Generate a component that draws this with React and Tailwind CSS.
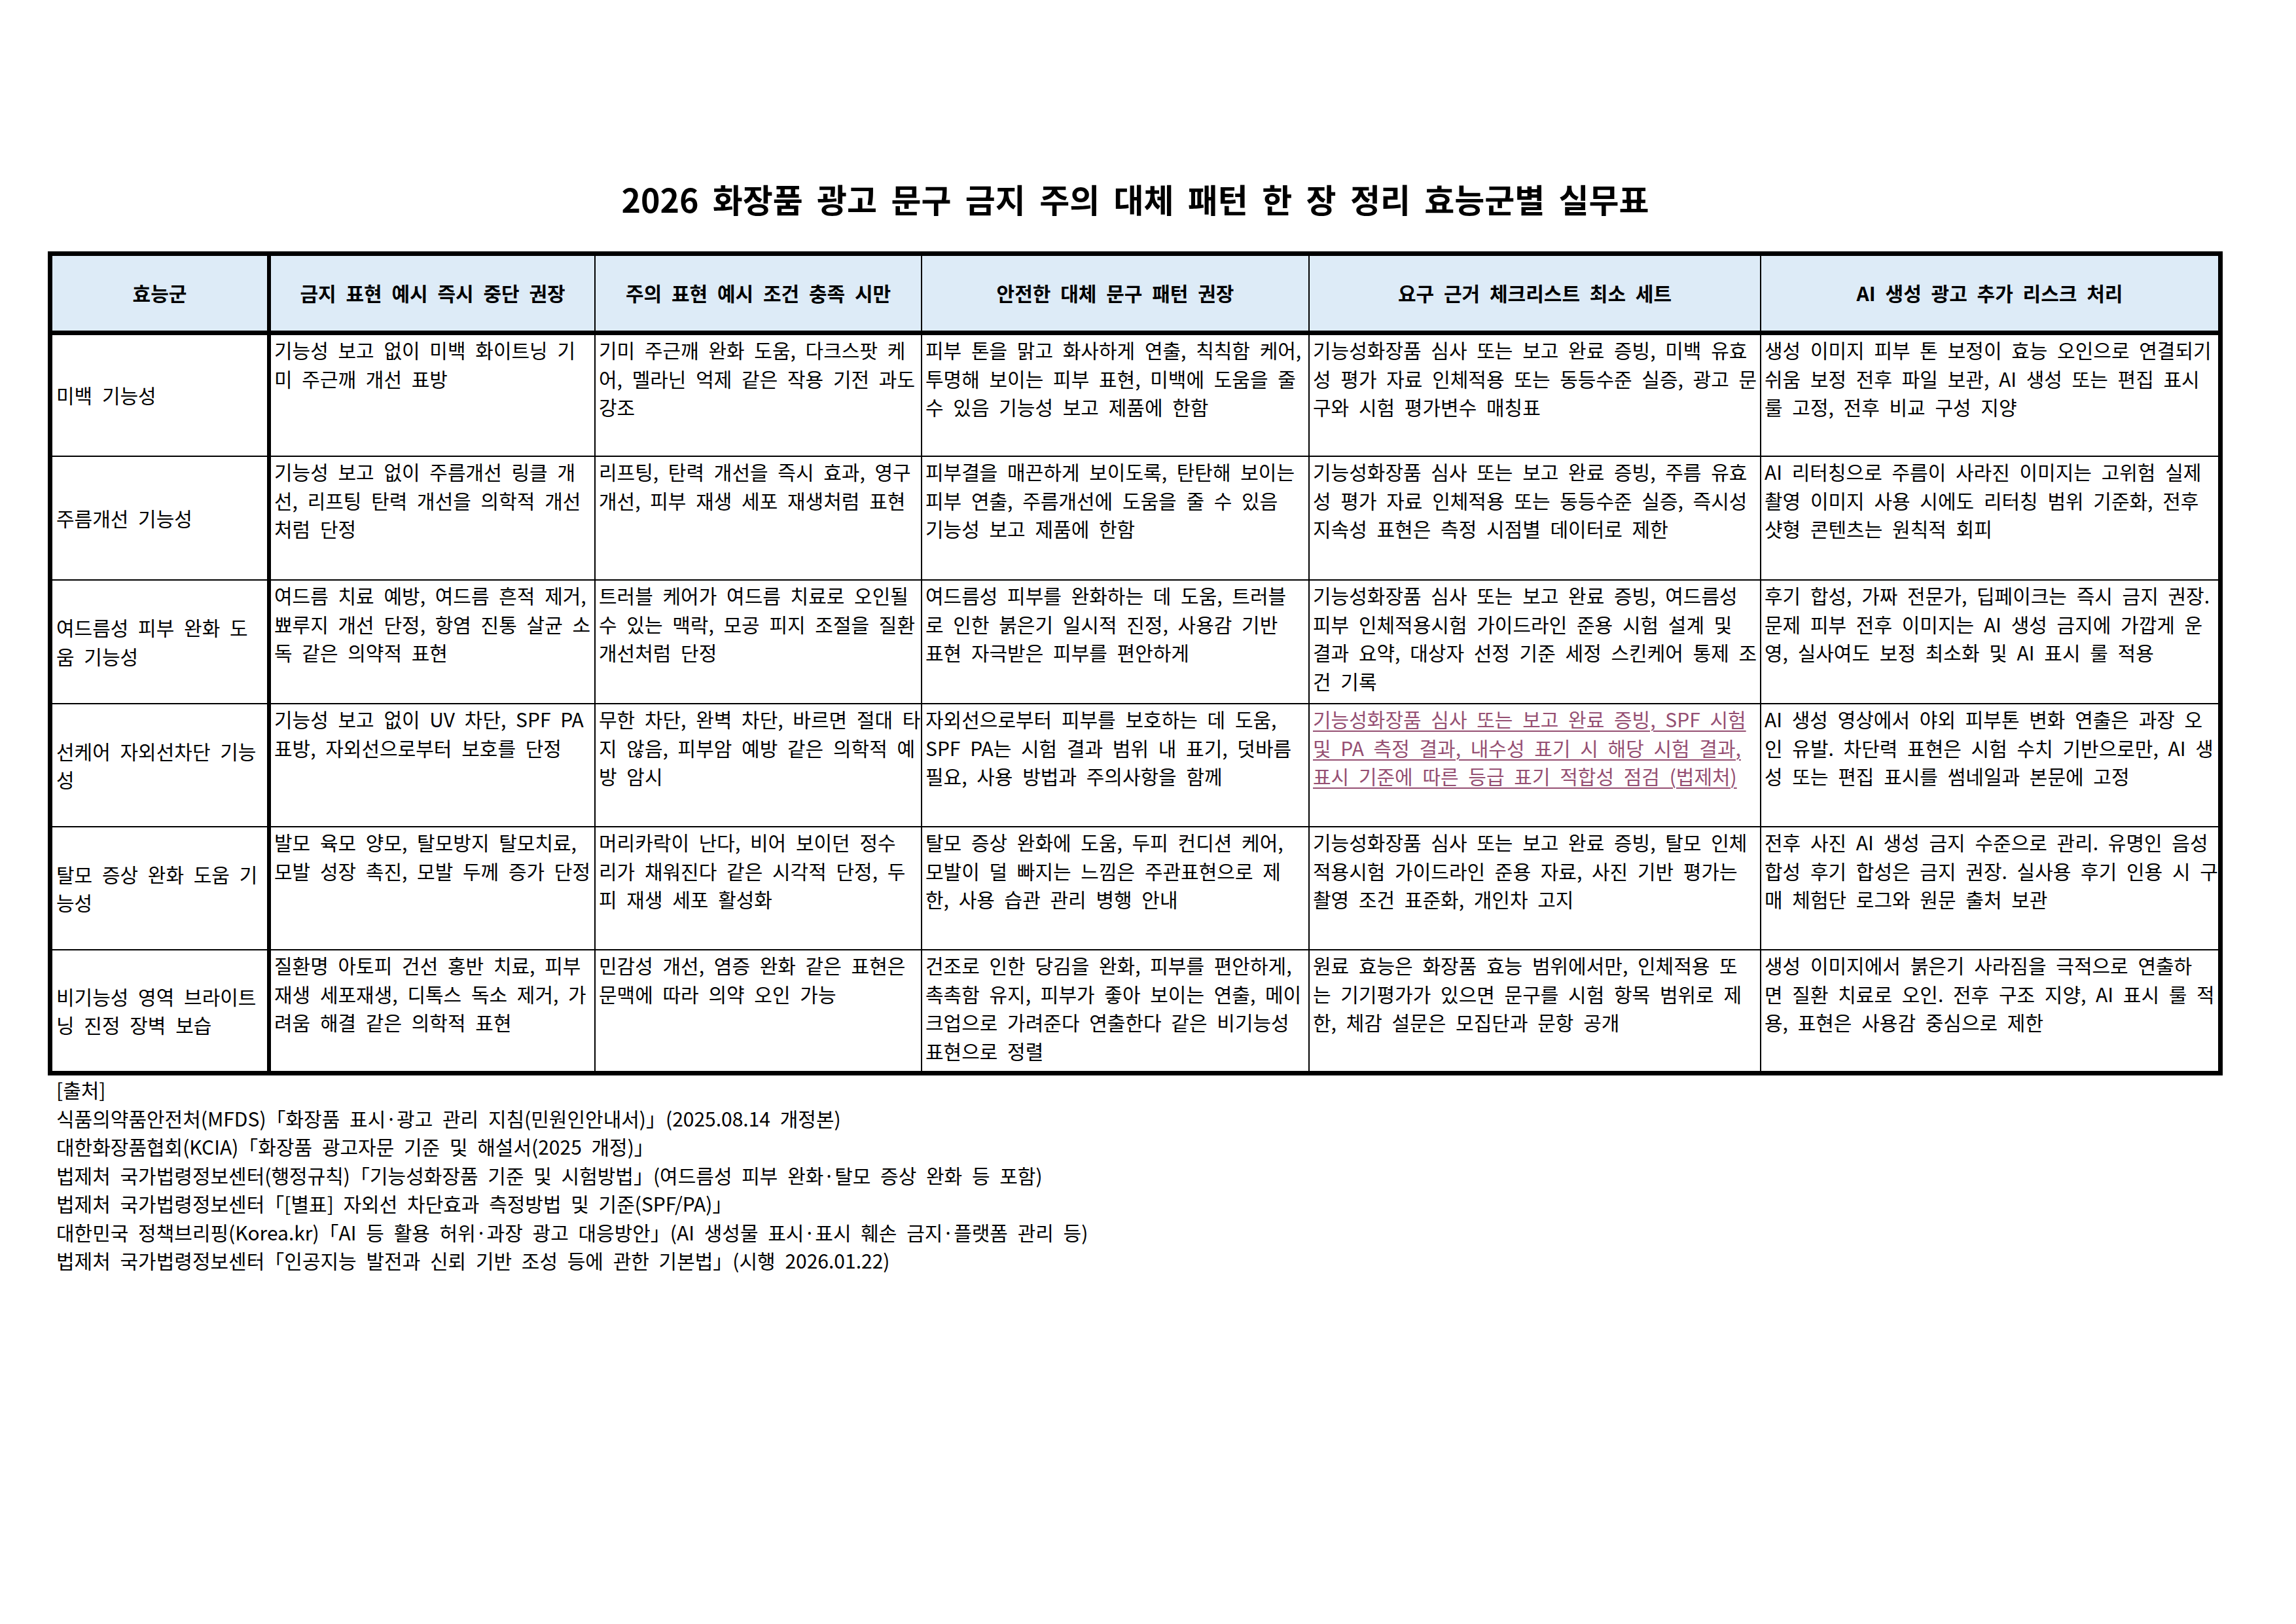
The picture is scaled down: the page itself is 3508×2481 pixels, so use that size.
import React from "react";

const headers = [
  "효능군",
  "금지 표현 예시 즉시 중단 권장",
  "주의 표현 예시 조건 충족 시만",
  "안전한 대체 문구 패턴 권장",
  "요구 근거 체크리스트 최소 세트",
  "AI 생성 광고 추가 리스크 처리",
];

// 각 셀은 원본과 같은 줄바꿈을 유지하려고 줄 단위로 적음
const rows = [
  {
    name: ["미백 기능성"],
    cells: [
      ["기능성 보고 없이 미백 화이트닝 기", "미 주근깨 개선 표방"],
      ["기미 주근깨 완화 도움, 다크스팟 케", "어, 멜라닌 억제 같은 작용 기전 과도", "강조"],
      ["피부 톤을 맑고 화사하게 연출, 칙칙함 케어,", "투명해 보이는 피부 표현, 미백에 도움을 줄", "수 있음 기능성 보고 제품에 한함"],
      ["기능성화장품 심사 또는 보고 완료 증빙, 미백 유효", "성 평가 자료 인체적용 또는 동등수준 실증, 광고 문", "구와 시험 평가변수 매칭표"],
      ["생성 이미지 피부 톤 보정이 효능 오인으로 연결되기", "쉬움 보정 전후 파일 보관, AI 생성 또는 편집 표시", "룰 고정, 전후 비교 구성 지양"],
    ],
  },
  {
    name: ["주름개선 기능성"],
    cells: [
      ["기능성 보고 없이 주름개선 링클 개", "선, 리프팅 탄력 개선을 의학적 개선", "처럼 단정"],
      ["리프팅, 탄력 개선을 즉시 효과, 영구", "개선, 피부 재생 세포 재생처럼 표현"],
      ["피부결을 매끈하게 보이도록, 탄탄해 보이는", "피부 연출, 주름개선에 도움을 줄 수 있음", "기능성 보고 제품에 한함"],
      ["기능성화장품 심사 또는 보고 완료 증빙, 주름 유효", "성 평가 자료 인체적용 또는 동등수준 실증, 즉시성", "지속성 표현은 측정 시점별 데이터로 제한"],
      ["AI 리터칭으로 주름이 사라진 이미지는 고위험 실제", "촬영 이미지 사용 시에도 리터칭 범위 기준화, 전후", "샷형 콘텐츠는 원칙적 회피"],
    ],
  },
  {
    name: ["여드름성 피부 완화 도", "움 기능성"],
    cells: [
      ["여드름 치료 예방, 여드름 흔적 제거,", "뾰루지 개선 단정, 항염 진통 살균 소", "독 같은 의약적 표현"],
      ["트러블 케어가 여드름 치료로 오인될", "수 있는 맥락, 모공 피지 조절을 질환", "개선처럼 단정"],
      ["여드름성 피부를 완화하는 데 도움, 트러블", "로 인한 붉은기 일시적 진정, 사용감 기반", "표현 자극받은 피부를 편안하게"],
      ["기능성화장품 심사 또는 보고 완료 증빙, 여드름성", "피부 인체적용시험 가이드라인 준용 시험 설계 및", "결과 요약, 대상자 선정 기준 세정 스킨케어 통제 조", "건 기록"],
      ["후기 합성, 가짜 전문가, 딥페이크는 즉시 금지 권장.", "문제 피부 전후 이미지는 AI 생성 금지에 가깝게 운", "영, 실사여도 보정 최소화 및 AI 표시 룰 적용"],
    ],
  },
  {
    name: ["선케어 자외선차단 기능", "성"],
    link: 3,
    cells: [
      ["기능성 보고 없이 UV 차단, SPF PA", "표방, 자외선으로부터 보호를 단정"],
      ["무한 차단, 완벽 차단, 바르면 절대 타", "지 않음, 피부암 예방 같은 의학적 예", "방 암시"],
      ["자외선으로부터 피부를 보호하는 데 도움,", "SPF PA는 시험 결과 범위 내 표기, 덧바름", "필요, 사용 방법과 주의사항을 함께"],
      ["기능성화장품 심사 또는 보고 완료 증빙, SPF 시험", "및 PA 측정 결과, 내수성 표기 시 해당 시험 결과,", "표시 기준에 따른 등급 표기 적합성 점검 (법제처)"],
      ["AI 생성 영상에서 야외 피부톤 변화 연출은 과장 오", "인 유발. 차단력 표현은 시험 수치 기반으로만, AI 생", "성 또는 편집 표시를 썸네일과 본문에 고정"],
    ],
  },
  {
    name: ["탈모 증상 완화 도움 기", "능성"],
    cells: [
      ["발모 육모 양모, 탈모방지 탈모치료,", "모발 성장 촉진, 모발 두께 증가 단정"],
      ["머리카락이 난다, 비어 보이던 정수", "리가 채워진다 같은 시각적 단정, 두", "피 재생 세포 활성화"],
      ["탈모 증상 완화에 도움, 두피 컨디션 케어,", "모발이 덜 빠지는 느낌은 주관표현으로 제", "한, 사용 습관 관리 병행 안내"],
      ["기능성화장품 심사 또는 보고 완료 증빙, 탈모 인체", "적용시험 가이드라인 준용 자료, 사진 기반 평가는", "촬영 조건 표준화, 개인차 고지"],
      ["전후 사진 AI 생성 금지 수준으로 관리. 유명인 음성", "합성 후기 합성은 금지 권장. 실사용 후기 인용 시 구", "매 체험단 로그와 원문 출처 보관"],
    ],
  },
  {
    name: ["비기능성 영역 브라이트", "닝 진정 장벽 보습"],
    cells: [
      ["질환명 아토피 건선 홍반 치료, 피부", "재생 세포재생, 디톡스 독소 제거, 가", "려움 해결 같은 의학적 표현"],
      ["민감성 개선, 염증 완화 같은 표현은", "문맥에 따라 의약 오인 가능"],
      ["건조로 인한 당김을 완화, 피부를 편안하게,", "촉촉함 유지, 피부가 좋아 보이는 연출, 메이", "크업으로 가려준다 연출한다 같은 비기능성", "표현으로 정렬"],
      ["원료 효능은 화장품 효능 범위에서만, 인체적용 또", "는 기기평가가 있으면 문구를 시험 항목 범위로 제", "한, 체감 설문은 모집단과 문항 공개"],
      ["생성 이미지에서 붉은기 사라짐을 극적으로 연출하", "면 질환 치료로 오인. 전후 구조 지양, AI 표시 룰 적", "용, 표현은 사용감 중심으로 제한"],
    ],
  },
];

const sources = [
  "[출처]",
  "식품의약품안전처(MFDS)「화장품 표시·광고 관리 지침(민원인안내서)」(2025.08.14 개정본)",
  "대한화장품협회(KCIA)「화장품 광고자문 기준 및 해설서(2025 개정)」",
  "법제처 국가법령정보센터(행정규칙)「기능성화장품 기준 및 시험방법」(여드름성 피부 완화·탈모 증상 완화 등 포함)",
  "법제처 국가법령정보센터「[별표] 자외선 차단효과 측정방법 및 기준(SPF/PA)」",
  "대한민국 정책브리핑(Korea.kr)「AI 등 활용 허위·과장 광고 대응방안」(AI 생성물 표시·표시 훼손 금지·플랫폼 관리 등)",
  "법제처 국가법령정보센터「인공지능 발전과 신뢰 기반 조성 등에 관한 기본법」(시행 2026.01.22)",
];

const Lines = ({ lines }) =>
  lines.map((l, i) => (
    <div key={i} className="whitespace-nowrap">
      {l}
    </div>
  ));

export default function App() {
  return (
    <div className="min-h-screen w-full bg-white text-black font-['Noto_Sans_CJK_KR','Noto_Sans',sans-serif]">
      <div className="w-[3396px] pl-[73px] pt-[268px] flex flex-col">
        <h1 className="text-center text-[50px] leading-[70px] font-bold [word-spacing:10px]">
          2026 화장품 광고 문구 금지 주의 대체 패턴 한 장 정리 효능군별 실무표
        </h1>

        <div className="mt-[46px] border-[7px] border-black">
          <div className="grid grid-cols-[334px_496px_499px_592px_690px_698px] grid-rows-[121px_186px_189px_189px_188px_188px_184px] text-[30px] leading-[43.5px] [word-spacing:8px]">
            {headers.map((h, i) => (
              <div
                key={h}
                className={
                  "flex items-center justify-center bg-[#ddebf7] font-bold border-b-[7px] border-black " +
                  (i === 0 ? "border-r-[6px]" : i < 5 ? "border-r-2" : "")
                }
              >
                {h}
              </div>
            ))}

            {rows.map((r, ri) => {
              const last = ri === rows.length - 1;
              return (
                <React.Fragment key={ri}>
                  <div
                    className={
                      "flex flex-col justify-center px-[6px] border-r-[6px] border-black " +
                      (last ? "" : "border-b-2")
                    }
                  >
                    <Lines lines={r.name} />
                  </div>
                  {r.cells.map((c, ci) => (
                    <div
                      key={ci}
                      className={
                        "px-[5px] pt-[1px] border-black " +
                        (ci < 4 ? "border-r-2 " : "") +
                        (last ? "" : "border-b-2 ") +
                        (r.link === ci ? "text-[#954f72] underline decoration-2 underline-offset-[5px]" : "")
                      }
                    >
                      <Lines lines={c} />
                    </div>
                  ))}
                </React.Fragment>
              );
            })}
          </div>
        </div>

        <div className="pl-[13px] text-[30px] leading-[43.5px] [word-spacing:8px]">
          {sources.map((s) => (
            <div key={s} className="whitespace-nowrap">
              {s}
            </div>
          ))}
        </div>
      </div>
    </div>
  );
}
